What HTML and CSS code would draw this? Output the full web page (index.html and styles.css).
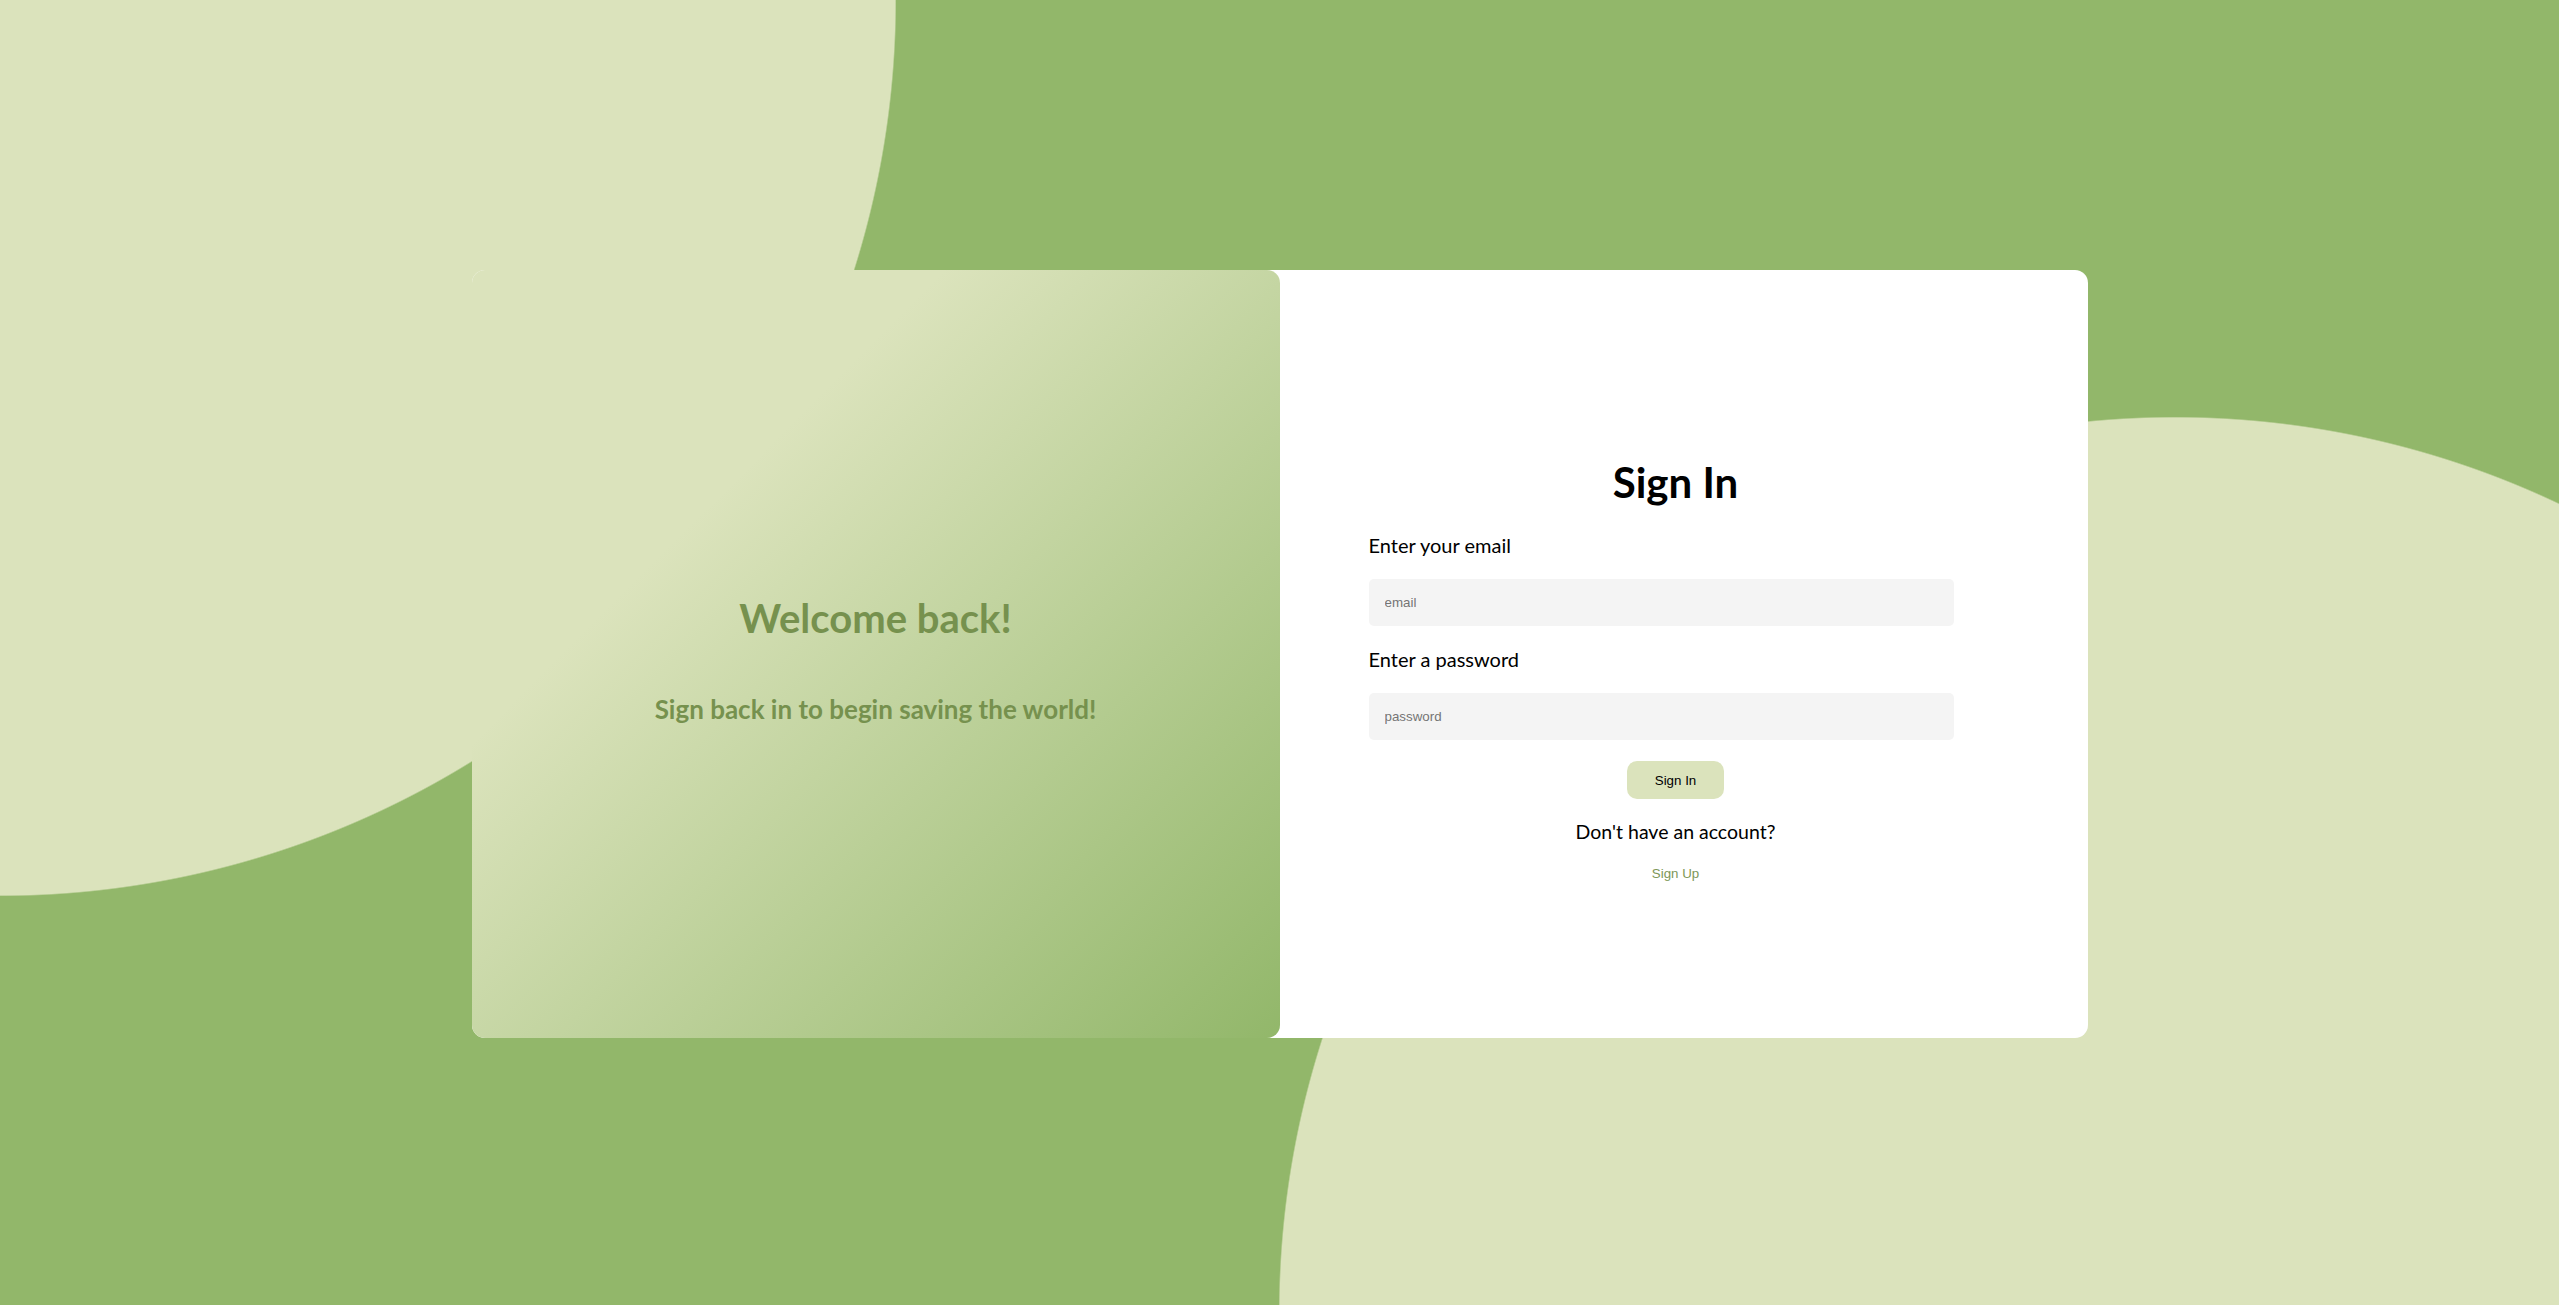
FILE: index.html
```html
<!DOCTYPE html>
<html lang="en">
<head>
<meta charset="utf-8">
<title>Sign In</title>
<link rel="stylesheet" href="styles.css">
</head>
<body>
<main class="stage">
  <section class="card">
    <div class="welcome">
      <h1 class="welcome-title">Welcome back!</h1>
      <p class="welcome-sub">Sign back in to begin saving the world!</p>
    </div>
    <div class="form-panel">
      <form class="form">
        <h2 class="form-title">Sign In</h2>
        <label class="field-label" for="email">Enter your email</label>
        <input class="field" id="email" type="email" placeholder="email">
        <label class="field-label" for="password">Enter a password</label>
        <input class="field" id="password" type="password" placeholder="password">
        <button class="submit" type="button">Sign In</button>
        <p class="switch-text">Don't have an account?</p>
        <a class="switch-link" href="#">Sign Up</a>
      </form>
    </div>
  </section>
</main>
</body>
</html>
```

FILE: styles.css
```css
html, body {
  margin: 0;
  padding: 0;
}

body {
  width: 2559px;
  height: 1305px;
  overflow: hidden;
  font-family: "Lato", "Open Sans", sans-serif;
  background:
    radial-gradient(circle 896px at 0 0, #dbe3bc 895px, rgba(219, 227, 188, 0) 896.5px),
    radial-gradient(circle 896px at 2175px 1313px, #dbe3bc 895px, rgba(219, 227, 188, 0) 896.5px),
    #92b76a;
}

.stage {
  height: 100%;
  display: flex;
  align-items: center;
  justify-content: center;
  padding-top: 3px;
  box-sizing: border-box;
}

.card {
  width: 1616px;
  height: 768px;
  display: flex;
  background: #ffffff;
  border-radius: 13px;
}

.welcome {
  width: 808px;
  flex: none;
  box-sizing: border-box;
  padding-top: 10px;
  border-radius: 13px;
  background: linear-gradient(135deg, #dbe3bc 30%, #92b76a 100%);
  display: flex;
  flex-direction: column;
  align-items: center;
  justify-content: center;
  color: #76914e;
}

.welcome-title {
  margin: 0;
  font-size: 40px;
  line-height: 48px;
  font-weight: 700;
}

.welcome-sub {
  margin: 52px 0 0;
  font-size: 26px;
  line-height: 31px;
  font-weight: 700;
}

.form-panel {
  flex: 1;
  padding: 189px 0 0 89px;
}

.form {
  width: 614px;
  display: flex;
  flex-direction: column;
  align-items: flex-start;
}

.form-title {
  align-self: center;
  margin: 0;
  font-size: 42px;
  line-height: 46px;
  font-weight: 700;
  color: #000;
}

.field-label {
  margin-top: 28px;
  font-size: 20px;
  line-height: 24px;
  color: #000;
}

.field {
  margin-top: 22px;
  width: 585px;
  height: 47px;
  box-sizing: border-box;
  padding: 0 16px;
  border: none;
  border-radius: 5px;
  background: #f4f4f4;
  font-family: "Liberation Sans", Arial, sans-serif;
  font-size: 13.33px;
  color: #000;
  outline: none;
}

.field::placeholder {
  color: #757575;
}

.field + .field-label {
  margin-top: 21px;
}

.submit {
  align-self: center;
  margin-top: 21px;
  height: 38px;
  padding: 0 28px;
  border: none;
  border-radius: 10px;
  background: #dbe3bc;
  font-family: "Liberation Sans", Arial, sans-serif;
  font-size: 13.33px;
  color: #000;
}

.switch-text {
  align-self: center;
  margin: 21px 0 0;
  font-size: 19.5px;
  line-height: 24px;
  color: #000;
}

.switch-link {
  align-self: center;
  margin-top: 22px;
  font-family: "Liberation Sans", Arial, sans-serif;
  font-size: 13.33px;
  line-height: 16px;
  color: #7d9757;
  text-decoration: none;
}
```
